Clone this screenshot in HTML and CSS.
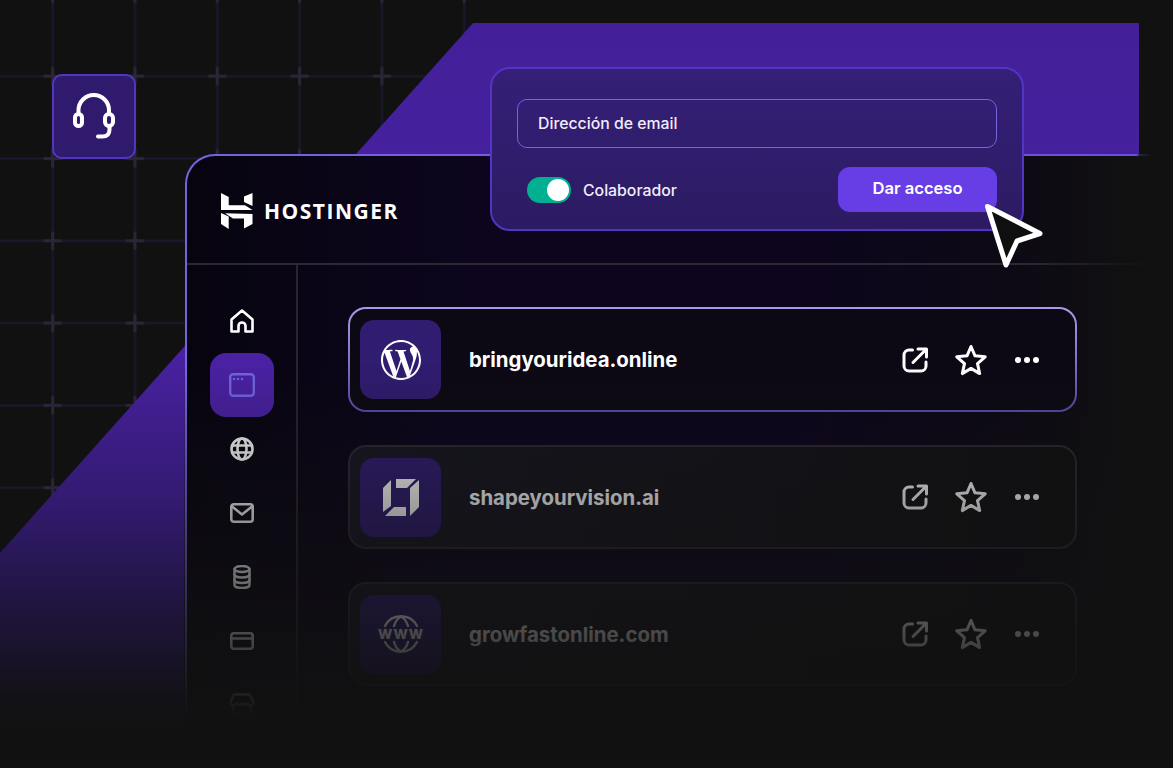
FILE: index.html
```html
<!DOCTYPE html>
<html>
<head>
	<title>Hostinger</title>
	<link rel="stylesheet" href="styles.css">
</head>
<body>
	<div class="scene">
		<svg class="backdrop" width="1173" height="768" viewBox="0 0 1173 768">
			<defs>
				<pattern id="grid" width="82.3" height="82.3" patternUnits="userSpaceOnUse" patternTransform="translate(11.5 35)">
					<rect x="40.2" y="0" width="2" height="82.3" fill="#1b1730"/>
					<rect x="0" y="40.2" width="82.3" height="2" fill="#1d1830"/>
					<rect x="32.2" y="39.7" width="18" height="3" fill="#2a2638"/>
					<rect x="39.7" y="32.2" width="3" height="18" fill="#2a2638"/>
				</pattern>
				<linearGradient id="purple" gradientUnits="userSpaceOnUse" x1="0" y1="23" x2="0" y2="730">
					<stop offset="0" stop-color="#43209a"/>
					<stop offset="0.46" stop-color="#4a21a3"/>
					<stop offset="0.68" stop-color="#321a70"/>
					<stop offset="0.82" stop-color="#20153f"/>
					<stop offset="0.95" stop-color="#131118"/>
					<stop offset="1" stop-color="#111111"/>
				</linearGradient>
			</defs>
			<rect x="0" y="0" width="472" height="600" fill="url(#grid)"/>
			<polygon points="473,23 1139,23 1139,300 186,300 186,768 0,768 0,553" fill="url(#purple)"/>
		</svg>

		<div class="badge">
			<svg class="ico" width="48" height="48" viewBox="0 0 48 48" stroke-width="4">
				<path d="M8.5 20V17.3a15.25 15.25 0 0 1 30.5 0V20"/>
				<rect x="5" y="21" width="7" height="12" rx="3.5"/>
				<rect x="35" y="21" width="8" height="12" rx="4"/>
				<path d="M39.5 34V36.500q0 7-7 7H28"/>
			</svg>
		</div>

		<div class="panel">
			<header class="panel-head">
				<svg class="logo-mark" width="32" height="36" viewBox="0 0 32 36">
					<polygon points="0,0 7.700,4 7.700,12.300 24,12.300 31.500,17 0,17"/>
					<polygon points="23,3.500 31.500,0 31.500,13 23,9"/>
					<polygon points="0,20 7.700,23.500 7.700,36 0,31"/>
					<polygon points="4,20.300 31.500,21 31.500,31 23,35.500 23,25.500 12,25.500"/>
				</svg>
				<span class="logo-text">HOSTINGER</span>
			</header>

			<div class="panel-body">
				<nav class="side">
					<a class="side-item" href="#">
						<svg class="ico" width="26" height="26" viewBox="0 0 26 26" stroke-width="2.600">
							<path d="M2.500 11.500L13 2.500l10.500 9V23.500H16.500V18a3.500 3.500 0 0 0-7 0v5.500H2.500z"/>
						</svg>
					</a>
					<a class="side-item active" href="#">
						<svg class="ico" width="26" height="24" viewBox="0 0 26 24" stroke-width="2.400">
							<rect x="1.200" y="1.200" width="23.600" height="21.600" rx="3"/>
							<path d="M5 6h.1M9 6h.1M13 6h.1"/>
						</svg>
					</a>
					<a class="side-item" href="#">
						<svg class="ico" width="24" height="24" viewBox="0 0 24 24" stroke-width="2.600">
							<circle cx="12" cy="12" r="10.500"/>
							<ellipse cx="12" cy="12" rx="4.500" ry="10.500"/>
							<path d="M2 8.500h20M2 15.500h20"/>
						</svg>
					</a>
					<a class="side-item" href="#">
						<svg class="ico" width="24" height="20" viewBox="0 0 24 20" stroke-width="2.600">
							<rect x="1.300" y="1.300" width="21.400" height="17.400" rx="2.500"/>
							<path d="M2 3.500l10 8 10-8"/>
						</svg>
					</a>
					<a class="side-item" href="#">
						<svg class="ico" width="18" height="24" viewBox="0 0 18 24" stroke-width="2.400">
							<ellipse cx="9" cy="4" rx="7.500" ry="3"/>
							<path d="M1.500 4v16c0 1.700 3.400 3 7.500 3s7.500-1.300 7.500-3V4"/>
							<path d="M1.500 9.500c0 1.700 3.400 3 7.500 3s7.500-1.300 7.500-3M1.500 15c0 1.700 3.400 3 7.500 3s7.500-1.300 7.500-3"/>
						</svg>
					</a>
					<a class="side-item" href="#">
						<svg class="ico" width="24" height="18" viewBox="0 0 24 18" stroke-width="2.600">
							<rect x="1.300" y="1.300" width="21.400" height="15.400" rx="2.500"/>
							<path d="M1.500 6.500h21"/>
						</svg>
					</a>
					<a class="side-item" href="#">
						<svg class="ico" width="26" height="24" viewBox="0 0 26 24" stroke-width="2.400">
							<path d="M5 1.500h16l3.500 8a3 3 0 0 1-5.800.800 3.500 3.500 0 0 1-5.700 0 3.500 3.500 0 0 1-5.700 0 3 3 0 0 1-5.800-.800z"/>
							<path d="M4 13v7.500a2 2 0 0 0 2 2h14a2 2 0 0 0 2-2V13"/>
						</svg>
					</a>
				</nav>

				<main class="sites">
					<div class="site site-main">
						<div class="thumb">
							<svg class="wp" width="40" height="40" viewBox="0 0 24 24">
								<path d="M21.469 6.825c.84 1.537 1.318 3.3 1.318 5.175 0 3.979-2.156 7.456-5.363 9.325l3.295-9.527c.615-1.54.82-2.771.82-3.864 0-.405-.026-.78-.07-1.11m-7.981.105c.647-.03 1.232-.105 1.232-.105.582-.075.514-.93-.067-.899 0 0-1.755.135-2.88.135-1.064 0-2.85-.15-2.85-.15-.585-.03-.661.855-.075.885 0 0 .54.061 1.125.09l1.68 4.605-2.37 7.08L5.354 6.9c.649-.03 1.234-.1 1.234-.1.585-.075.516-.93-.065-.896 0 0-1.746.138-2.874.138-.2 0-.438-.008-.69-.015C4.911 3.15 8.235 1.215 12 1.215c2.809 0 5.365 1.072 7.286 2.833-.046-.003-.091-.009-.141-.009-1.06 0-1.812.923-1.812 1.914 0 .89.513 1.643 1.06 2.531.411.72.89 1.643.89 2.977 0 .915-.354 1.994-.821 3.479l-1.075 3.585-3.9-11.61.001.014zM12 22.784c-1.059 0-2.081-.153-3.048-.437l3.237-9.406 3.315 9.087c.024.053.05.101.078.149-1.12.393-2.325.609-3.582.609M1.211 12c0-1.564.336-3.05.935-4.39L7.29 21.709C3.694 19.96 1.212 16.271 1.211 12M12 0C5.385 0 0 5.385 0 12s5.385 12 12 12 12-5.385 12-12S18.615 0 12 0"/>
							</svg>
						</div>
						<span class="site-name">bringyouridea.online</span>
						<div class="site-actions">
							<span class="act"><svg class="ico" width="26" height="26" viewBox="0 0 26 26" stroke-width="3"><path d="M10.500 3H7a5 5 0 0 0-5 5v11a5 5 0 0 0 5 5h12a5 5 0 0 0 5-5v-4"/><path d="M11 15.500L23.500 3M16 2h8.500v8"/></svg></span>
							<span class="act"><svg class="ico" width="32" height="32" viewBox="0 0 32 32" stroke-width="3"><path d="M16 2.500l4 9.300 10.200 1-7.700 6.800 2.200 10-8.700-5.200-8.700 5.200 2.200-10-7.700-6.800 10.200-1z"/></svg></span>
							<span class="act"><span class="dots"><i></i><i></i><i></i></span></span>
						</div>
					</div>

					<div class="site">
						<div class="thumb">
							<svg class="shape" width="38" height="37" viewBox="0 0 38 37">
								<polygon points="1,9 9,1 9,27 1,33"/>
								<polygon points="14,0 34,0 25,9 14,9"/>
								<polygon points="28,9 37,1 37,28 28,37"/>
								<polygon points="3,37 12,28 24,28 24,37"/>
							</svg>
						</div>
						<span class="site-name">shapeyourvision.ai</span>
						<div class="site-actions">
							<span class="act"><svg class="ico" width="26" height="26" viewBox="0 0 26 26" stroke-width="3"><path d="M10.500 3H7a5 5 0 0 0-5 5v11a5 5 0 0 0 5 5h12a5 5 0 0 0 5-5v-4"/><path d="M11 15.500L23.500 3M16 2h8.500v8"/></svg></span>
							<span class="act"><svg class="ico" width="32" height="32" viewBox="0 0 32 32" stroke-width="3"><path d="M16 2.500l4 9.300 10.200 1-7.700 6.800 2.200 10-8.700-5.200-8.700 5.200 2.200-10-7.700-6.800 10.200-1z"/></svg></span>
							<span class="act"><span class="dots"><i></i><i></i><i></i></span></span>
						</div>
					</div>

					<div class="site">
						<div class="thumb">
							<svg class="ico www" width="52" height="38" viewBox="-5 0 52 38" stroke-width="2.400">
								<path d="M5 11A18 18 0 0 1 37 11M14 11Q16 4 21 1.500Q26 4 28 11M5 27A18 18 0 0 0 37 27M14 27Q16 34 21 36.500Q26 34 28 27"/>
								<text x="21" y="24" text-anchor="middle">WWW</text>
							</svg>
						</div>
						<span class="site-name">growfastonline.com</span>
						<div class="site-actions">
							<span class="act"><svg class="ico" width="26" height="26" viewBox="0 0 26 26" stroke-width="3"><path d="M10.500 3H7a5 5 0 0 0-5 5v11a5 5 0 0 0 5 5h12a5 5 0 0 0 5-5v-4"/><path d="M11 15.500L23.500 3M16 2h8.500v8"/></svg></span>
							<span class="act"><svg class="ico" width="32" height="32" viewBox="0 0 32 32" stroke-width="3"><path d="M16 2.500l4 9.300 10.200 1-7.700 6.800 2.200 10-8.700-5.200-8.700 5.200 2.200-10-7.700-6.800 10.200-1z"/></svg></span>
							<span class="act"><span class="dots"><i></i><i></i><i></i></span></span>
						</div>
					</div>
				</main>
			</div>
			<div class="panel-fade"></div>
		</div>

		<div class="popup">
			<div class="field">Dirección de email</div>
			<div class="popup-row">
				<div class="switch"><span class="knob"></span></div>
				<span class="switch-label">Colaborador</span>
				<button class="grant">Dar acceso</button>
			</div>
		</div>

		<svg class="cursor" width="64" height="70" viewBox="0 0 64 70">
			<path d="M4.500 3.500L57 30.500 34 38 23 62z"/>
		</svg>
	</div>
</body>
</html>
```

FILE: styles.css
```css
* {
  box-sizing: border-box;
}

body {
  margin: 0;
  background-color: #111;
  font-family: "Inter", "Liberation Sans", sans-serif;
  color: #fff;
}

.scene {
  position: relative;
  width: 1173px;
  height: 768px;
  overflow: hidden;
  background-color: #111;
}

.backdrop {
  position: absolute;
  top: 0;
  left: 0;
}

.ico {
  fill: none;
  stroke: currentColor;
  stroke-linecap: round;
  stroke-linejoin: round;
}

/* support badge */
.badge {
  position: absolute;
  top: 74px;
  left: 52px;
  width: 84px;
  height: 85px;
  display: flex;
  justify-content: center;
  align-items: center;
  padding-top: 1px;
  background-color: #2f1a6e;
  border: 2px solid #5236bf;
  border-radius: 10px;
}

/* dashboard window */
.panel {
  position: absolute;
  top: 154px;
  left: 185px;
  width: 988px;
  height: 572px;
  border-top: 2px solid transparent;
  border-left: 2px solid transparent;
  border-radius: 30px 0 0 0;
  background:
    linear-gradient(90deg, #07040f 0, #0c051d 28%, #0c051d 62%, #0d0a14 85%, #111 97%) padding-box,
    linear-gradient(90deg, #7564dc 0, #6a4fe0 96.300%, #2a2540 96.600%, transparent 97.800%) border-box;
}

.panel-head {
  display: flex;
  align-items: center;
  height: 109px;
  padding: 3px 0 0 34px;
  border-bottom: 2px solid;
  border-image: linear-gradient(90deg, #2b2933 85%, transparent 98%) 1;
}

.logo-mark {
  fill: #fff;
}

.logo-text {
  margin-left: 11px;
  font-family: "Open Sans", sans-serif;
  font-size: 21px;
  font-weight: 700;
  letter-spacing: 1.500px;
}

.panel-body {
  display: flex;
}

.side {
  display: flex;
  flex-direction: column;
  width: 111px;
  height: 461px;
  padding: 24px 23px 0;
  border-right: 2px solid #27252e;
}

.side-item {
  display: flex;
  flex: none;
  justify-content: center;
  align-items: center;
  width: 64px;
  height: 64px;
  border-radius: 16px;
  color: #fff;
}

.side-item.active {
  background-color: #4a21a3;
  color: #7264e6;
}

.sites {
  display: flex;
  flex-direction: column;
  gap: 33px;
  width: 779px;
  padding: 42px 0 0 50px;
}

.site {
  display: flex;
  align-items: center;
  width: 729px;
  height: 104px;
  padding: 0 20px 0 10px;
  border: 2px solid #2a2932;
  border-radius: 18px;
  background: linear-gradient(90deg, #181622, #101012);
}

.site-main {
  height: 105px;
  border-color: transparent;
  background:
    linear-gradient(#0c0914, #0c0914) padding-box,
    linear-gradient(#a99be8, #5a4ba8) border-box;
}

.thumb {
  display: flex;
  flex: none;
  justify-content: center;
  align-items: center;
  width: 81px;
  height: 79px;
  border-radius: 14px;
  background-color: #301c70;
}

.wp,
.shape {
  fill: #fff;
}

.www text {
  fill: #fff;
  stroke: none;
  font-family: "Inter", sans-serif;
  font-size: 13.500px;
  font-weight: 800;
  letter-spacing: 0.800px;
}

.site-name {
  flex: 1;
  margin-left: 28px;
  font-size: 20.400px;
  font-weight: 700;
}

.site-actions {
  display: flex;
}

.act {
  display: flex;
  justify-content: center;
  align-items: center;
  width: 56px;
  height: 40px;
  color: #fff;
}

.dots {
  display: flex;
  gap: 3px;
}

.dots i {
  width: 6px;
  height: 6px;
  border-radius: 50%;
  background-color: #fff;
}

/* window dissolves into the page towards the bottom */
.panel-fade {
  position: absolute;
  top: 206px;
  left: -3px;
  right: 0;
  height: 366px;
  background: linear-gradient(180deg, rgba(17, 17, 17, 0), #111 97%);
}

/* invite popup */
.popup {
  position: absolute;
  top: 67px;
  left: 490px;
  width: 534px;
  height: 164px;
  padding: 30px 25px 0;
  border: 2px solid #5434c4;
  border-radius: 20px;
  background: linear-gradient(180deg, #351f78, #2c1b62);
}

.field {
  display: flex;
  align-items: center;
  width: 480px;
  height: 49px;
  padding-left: 20px;
  border: 1.500px solid #7465e0;
  border-radius: 10px;
  font-size: 15.800px;
  font-weight: 500;
  color: #f1edfb;
}

.popup-row {
  display: flex;
  align-items: center;
  width: 480px;
  margin-top: 19px;
  padding-left: 10px;
}

.switch {
  display: flex;
  justify-content: flex-end;
  align-items: center;
  width: 44px;
  height: 26px;
  padding-right: 2px;
  border-radius: 13px;
  background-color: #00b090;
}

.knob {
  width: 22px;
  height: 22px;
  border-radius: 50%;
  background-color: #fff;
}

.switch-label {
  flex: 1;
  margin-left: 12px;
  padding-top: 2px;
  font-size: 15.800px;
  font-weight: 500;
  color: #f1edfb;
}

.grant {
  width: 159px;
  height: 45px;
  padding-bottom: 4px;
  border: none;
  border-radius: 12px;
  background-color: #673de6;
  color: #fff;
  font-family: inherit;
  font-size: 16.600px;
  font-weight: 600;
}

.cursor {
  position: absolute;
  top: 203px;
  left: 983px;
  fill: #0f0f10;
  stroke: #fff;
  stroke-width: 5;
  stroke-linejoin: round;
}
```
